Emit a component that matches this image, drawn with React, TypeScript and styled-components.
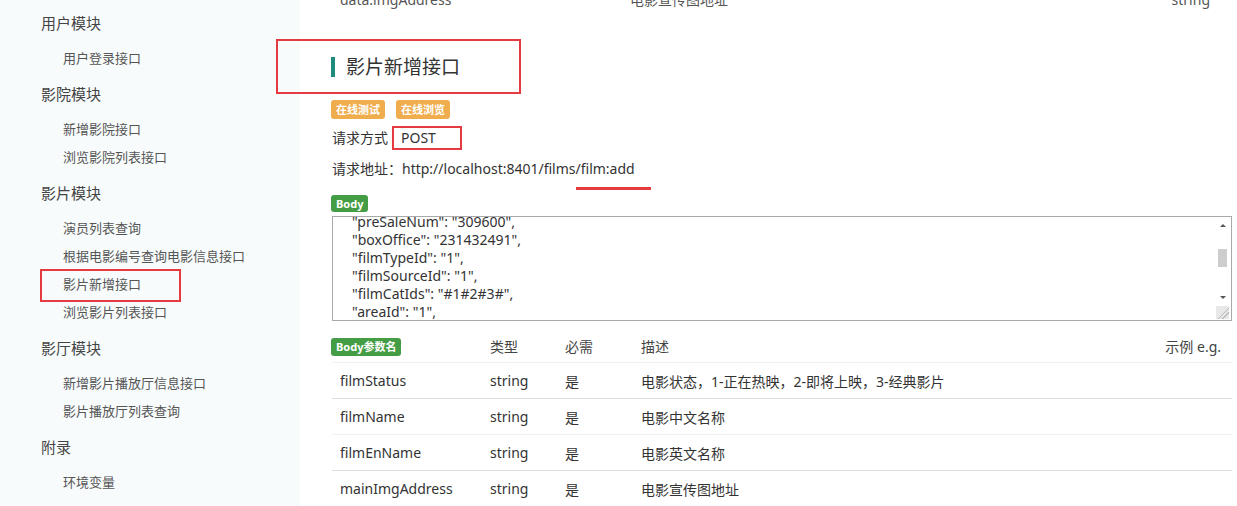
import styled, { createGlobalStyle } from 'styled-components';

const GlobalStyle = createGlobalStyle`
  html, body {
    margin: 0;
    padding: 0;
    background: #fff;
    overflow: hidden;
  }
  body {
    font-family: "Noto Sans", "Noto Sans CJK SC", sans-serif;
    color: #333;
  }
`;

const Page = styled.div`
  display: flex;
  width: 1237px;
  height: 506px;
  overflow: hidden;
`;

const Sidebar = styled.nav`
  width: 300px;
  flex-shrink: 0;
  background: #f8fbfc;
  padding: 8px 0 0 41px;
  box-sizing: border-box;
`;

const Group = styled.div`
  margin-bottom: 7px;
`;

const GroupTitle = styled.div`
  height: 30px;
  line-height: 30px;
  font-size: 15px;
  color: #444;
  margin-bottom: 6px;
`;

const NavItem = styled.div<{ $active?: boolean }>`
  position: relative;
  height: 28px;
  line-height: 28px;
  padding-left: 22px;
  font-size: 13px;
  color: #555;

  ${({ $active }) =>
    $active &&
    `
    &::after {
      content: '';
      position: absolute;
      left: -1px;
      top: -1px;
      width: 137px;
      height: 29px;
      border: 2px solid #e53a40;
    }
  `}
`;

const Main = styled.main`
  flex: 1;
  padding: 0 5px 0 31px;
  display: flex;
  flex-direction: column;
`;

const PrevRow = styled.div`
  display: grid;
  grid-template-columns: 290px 1fr auto;
  margin-top: -12px;
  height: 24px;
  line-height: 24px;
  font-size: 14px;
  color: #555;
  padding: 0 22px 0 9px;
`;

const TitleBox = styled.div`
  margin: 27px 0 0 -55px;
  width: 245px;
  height: 58px;
  box-sizing: border-box;
  border: 2px solid #e53a40;
  padding-left: 53px;
  display: flex;
  align-items: center;
`;

const Title = styled.h2`
  margin: 0;
  font-size: 19px;
  font-weight: 400;
  color: #333;
  border-left: 4px solid #1f8b7d;
  padding-left: 11px;
  line-height: 20px;
`;

const BadgeRow = styled.div`
  display: flex;
  gap: 11px;
  margin-top: 6px;
`;

const Badge = styled.span<{ $color: string; $h?: number }>`
  display: inline-block;
  height: ${({ $h }) => $h || 18}px;
  line-height: ${({ $h }) => $h || 18}px;
  padding: 0 5px;
  border-radius: 3px;
  background: ${({ $color }) => $color};
  color: #fff;
  font-size: 11px;
  font-weight: 700;
  white-space: nowrap;
`;

const InfoLine = styled.div<{ $top: number }>`
  margin-top: ${({ $top }) => $top}px;
  height: 24px;
  line-height: 24px;
  font-size: 14px;
  padding-left: 1px;
  display: flex;
  align-items: center;
`;

const MethodBox = styled.span`
  display: inline-block;
  margin-left: 4px;
  width: 70px;
  height: 24px;
  line-height: 20px;
  box-sizing: border-box;
  border: 2px solid #e53a40;
  padding-left: 7px;
`;

const Marked = styled.span`
  position: relative;

  &::after {
    content: '';
    position: absolute;
    left: -5px;
    top: 30px;
    width: 75px;
    height: 3px;
    background: #e53a40;
  }
`;

const BodyBadgeWrap = styled.div`
  margin-top: 10px;
  height: 17px;
`;

const CodeBox = styled.div`
  margin: 8px 0 0 1px;
  height: 105px;
  box-sizing: border-box;
  border: 1px solid #a9a9a9;
  display: flex;
  background: #fff;
`;

const Code = styled.pre`
  flex: 1;
  margin: 0;
  overflow: hidden;
  font-family: inherit;
  font-size: 14px;
  line-height: 18px;
  color: #333;
  padding-left: 19px;

  & > div {
    margin-top: -4px;
  }
`;

const ScrollBar = styled.div`
  width: 17px;
  display: flex;
  flex-direction: column;
  align-items: center;
  background: #fff;
`;

const Arrow = styled.div<{ $down?: boolean }>`
  height: 17px;
  width: 17px;
  display: flex;
  align-items: center;
  justify-content: center;

  &::before {
    content: '';
    border-left: 3px solid transparent;
    border-right: 3px solid transparent;
    ${({ $down }) =>
      $down ? 'border-top: 3px solid #555;' : 'border-bottom: 3px solid #555;'}
  }
`;

const Track = styled.div`
  flex: 1;
  width: 100%;
  display: flex;
  justify-content: center;
  padding-top: 15px;
`;

const Thumb = styled.div`
  width: 9px;
  height: 18px;
  background: #cdcdcd;
`;

const Grip = styled.div`
  width: 13px;
  height: 13px;
  margin-bottom: 1px;
  background: linear-gradient(135deg, #e8e8e8 55%, #aaa 56%, #e8e8e8 62%, #e8e8e8 72%, #aaa 73%, #e8e8e8 80%);
`;

const Table = styled.div`
  margin-top: 7px;
  font-size: 14px;
`;

const Row = styled.div<{ $line?: string }>`
  display: grid;
  grid-template-columns: 150px 75px 76px 1fr auto;
  align-items: center;
  height: 36px;
  box-sizing: border-box;
  border-top: 1px solid ${({ $line }) => $line || 'transparent'};
  margin-left: 1px;
  color: #333;

  & > span {
    padding-left: 8px;
  }
`;

const HeadRow = styled(Row)`
  height: 34px;
  color: #444;

  & > span:first-child {
    padding-left: 0;
    margin-left: -1px;
  }
  & > span:last-child {
    padding-right: 11px;
  }
`;

const codeLines = [
  '"preSaleNum": "309600",',
  '"boxOffice": "231432491",',
  '"filmTypeId": "1",',
  '"filmSourceId": "1",',
  '"filmCatIds": "#1#2#3#",',
  '"areaId": "1",',
];

const params = [
  { name: 'filmStatus', desc: '电影状态，1-正在热映，2-即将上映，3-经典影片', line: '#f1f1f1' },
  { name: 'filmName', desc: '电影中文名称', line: '#dedede' },
  { name: 'filmEnName', desc: '电影英文名称', line: '#f1f1f1' },
  { name: 'mainImgAddress', desc: '电影宣传图地址', line: '#dedede' },
];

const nav = [
  { title: '用户模块', items: ['用户登录接口'] },
  { title: '影院模块', items: ['新增影院接口', '浏览影院列表接口'] },
  {
    title: '影片模块',
    items: ['演员列表查询', '根据电影编号查询电影信息接口', '影片新增接口', '浏览影片列表接口'],
  },
  { title: '影厅模块', items: ['新增影片播放厅信息接口', '影片播放厅列表查询'] },
  { title: '附录', items: ['环境变量'] },
];

function App() {
  return (
    <>
      <GlobalStyle />
      <Page>
        <Sidebar>
          {nav.map((g) => (
            <Group key={g.title}>
              <GroupTitle>{g.title}</GroupTitle>
              {g.items.map((it) => (
                <NavItem key={it} $active={it === '影片新增接口'}>
                  {it}
                </NavItem>
              ))}
            </Group>
          ))}
        </Sidebar>
        <Main>
          <PrevRow>
            <span>data.imgAddress</span>
            <span>电影宣传图地址</span>
            <span>string</span>
          </PrevRow>
          <TitleBox>
            <Title>影片新增接口</Title>
          </TitleBox>
          <BadgeRow>
            <Badge $color="#f0ad4e" $h={19}>在线测试</Badge>
            <Badge $color="#f0ad4e" $h={19}>在线浏览</Badge>
          </BadgeRow>
          <InfoLine $top={7}>
            请求方式
            <MethodBox>POST</MethodBox>
          </InfoLine>
          <InfoLine $top={7}>
            请求地址：http://localhost:8401/films/<Marked>film:add</Marked>
          </InfoLine>
          <BodyBadgeWrap>
            <Badge $color="#449d44" $h={17}>Body</Badge>
          </BodyBadgeWrap>
          <CodeBox>
            <Code>
              <div>{codeLines.join('\n')}</div>
            </Code>
            <ScrollBar>
              <Arrow />
              <Track>
                <Thumb />
              </Track>
              <Arrow $down />
              <Grip />
            </ScrollBar>
          </CodeBox>
          <Table>
            <HeadRow>
              <span>
                <Badge $color="#449d44">Body参数名</Badge>
              </span>
              <span>类型</span>
              <span>必需</span>
              <span>描述</span>
              <span>示例 e.g.</span>
            </HeadRow>
            {params.map((p) => (
              <Row key={p.name} $line={p.line}>
                <span>{p.name}</span>
                <span>string</span>
                <span>是</span>
                <span>{p.desc}</span>
                <span />
              </Row>
            ))}
          </Table>
        </Main>
      </Page>
    </>
  );
}

export default App;
